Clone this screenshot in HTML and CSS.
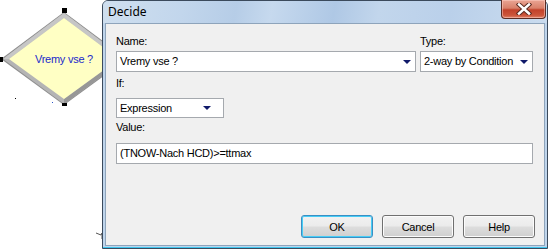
FILE: index.html
```html
<!DOCTYPE html>
<html lang="en">
<head>
    <meta charset="UTF-8">
    <title>Decide</title>
    <link rel="stylesheet" href="styles.css">
</head>
<body>
    <div class="desktop">
        <div class="node">
            <svg class="node-shape" width="130" height="110" viewBox="0 0 130 110">
                <polygon points="64,12 127,59 64,105 1,59" fill="#8e8e8e"/>
                <polygon points="64,13 125,59 64,104 3,59" fill="#b4b4b4"/>
                <polygon points="3,59 64,13 125,59 119,59 64,18 9,59" fill="#c6c6c6"/>
                <polygon points="64,104 125,59 119,59 64,99" fill="#979797"/>
                <polygon points="64,18 119,59 64,99 9,59" fill="#ffffc4"/>
                <rect x="62" y="8" width="5" height="5" fill="#000"/>
                <rect x="0" y="57" width="3" height="5" fill="#000"/>
                <rect x="62" y="103" width="5" height="3" fill="#000"/>
                <rect x="15" y="98" width="1" height="1" fill="#000"/>
                <rect x="52" y="102" width="1" height="1" fill="#2a55c8"/>
            </svg>
            <span class="node-label">Vremy vse ?</span>
        </div>
        <svg class="link-tip" width="8" height="8" viewBox="0 0 8 8">
            <path d="M0 2 L5 4 L6 2 L6 8" fill="none" stroke="#555" stroke-width="1"/>
        </svg>

        <div class="dialog">
            <div class="titlebar">
                <span class="title">Decide</span>
                <button class="close-btn" aria-label="Close">
                    <svg width="16" height="12" viewBox="0 0 16 12">
                        <path d="M3 1.5 L13 10.5 M13 1.5 L3 10.5" stroke="#5a2a20" stroke-width="4.5" stroke-linecap="square"/>
                        <path d="M3 1.5 L13 10.5 M13 1.5 L3 10.5" stroke="#fff" stroke-width="2.5" stroke-linecap="square"/>
                    </svg>
                </button>
            </div>
            <div class="client">
                <div class="row-top">
                    <div class="field name-field">
                        <label class="label">Name:</label>
                        <div class="combo">
                            <span>Vremy vse ?</span>
                            <span class="arrow"></span>
                        </div>
                    </div>
                    <div class="field type-field">
                        <label class="label">Type:</label>
                        <div class="combo">
                            <span>2-way by Condition</span>
                            <span class="arrow"></span>
                        </div>
                    </div>
                </div>
                <label class="label if-label">If:</label>
                <div class="combo expr-combo">
                    <span>Expression</span>
                    <span class="arrow"></span>
                </div>
                <label class="label value-label">Value:</label>
                <div class="textbox">(TNOW-Nach HCD)&gt;=ttmax</div>
                <div class="buttons">
                    <button class="btn btn-default">OK</button>
                    <button class="btn">Cancel</button>
                    <button class="btn">Help</button>
                </div>
            </div>
        </div>
    </div>
</body>
</html>
```

FILE: styles.css
```css
* {
    box-sizing: border-box;
    margin: 0;
    padding: 0;
}

body {
    background: #fff;
    font-family: 'Liberation Sans', Arial, sans-serif;
    font-size: 11px;
    letter-spacing: -0.25px;
    color: #000;
    overflow: hidden;
}

.desktop {
    position: relative;
    width: 549px;
    height: 249px;
    display: flex;
}

/* diagram node behind the dialog */
.node {
    position: absolute;
    left: 0;
    top: 0;
    width: 130px;
    height: 110px;
}

.node-shape {
    display: block;
}

.node-label {
    position: absolute;
    left: 0;
    top: 53px;
    width: 128px;
    text-align: center;
    font-size: 11px;
    line-height: 13px;
    color: #1a2acb;
}

.link-tip {
    position: absolute;
    left: 96px;
    top: 231px;
}

/* dialog window */
.dialog {
    position: relative;
    margin-left: 102px;
    width: 446px;
    height: 249px;
    display: flex;
    flex-direction: column;
    border: 1px solid #3b4a5c;
    border-radius: 6px 6px 0 0;
    padding: 0 2px 2px 2px;
    background: #bfd5ec;
    box-shadow: inset 0 -1px 0 #3fc6ef;
}

.titlebar {
    height: 22px;
    display: flex;
    align-items: flex-start;
    background: linear-gradient(100deg, #cfdfef 0%, #c2d6ec 18%, #b6cde7 30%, #c6d9ee 38%, #afc8e5 52%, #c2d6ec 62%, #bad0ea 78%, #cadcef 100%);
    margin: 0 -2px;
    padding-left: 5px;
    border-radius: 5px 5px 0 0;
}

.title {
    font-family: 'Noto Sans', 'Open Sans', sans-serif;
    font-size: 12px;
    letter-spacing: 0;
    line-height: 22px;
    color: #000;
}

.close-btn {
    margin-left: auto;
    margin-right: 1px;
    margin-top: -1px;
    width: 45px;
    height: 19px;
    border: 1px solid #5a2c24;
    border-top: none;
    border-radius: 0 0 4px 4px;
    background: linear-gradient(#eaa594 0%, #d9806a 45%, #c2412a 55%, #cc553a 85%, #e0836a 100%);
    box-shadow: inset 0 0 0 1px rgba(255, 210, 200, 0.5);
    display: flex;
    align-items: center;
    justify-content: center;
}

.client {
    flex: 1;
    display: flex;
    flex-direction: column;
    align-items: flex-start;
    background: #f0f0f0;
    border: 1px solid #8ea4bb;
    padding: 11px 9px 7px 10px;
}

.label {
    display: block;
    line-height: 13px;
    height: 13px;
}

.row-top {
    display: flex;
    gap: 4px;
}

.field .label {
    margin-bottom: 3px;
}

.name-field {
    width: 300px;
}

.type-field {
    width: 113px;
}

.combo {
    height: 21px;
    display: flex;
    align-items: center;
    justify-content: space-between;
    background: #fff;
    border: 1px solid #a5a9ae;
    padding: 0 4px 0 3px;
    line-height: 13px;
}

.arrow {
    width: 0;
    height: 0;
    border-left: 4px solid transparent;
    border-right: 4px solid transparent;
    border-top: 4px solid #101a6a;
}

.if-label {
    margin-top: 5px;
}

.expr-combo {
    width: 108px;
    height: 20px;
    margin-top: 8px;
    padding-right: 12px;
}

.value-label {
    margin-top: 3px;
}

.textbox {
    margin-top: 9px;
    width: 417px;
    height: 21px;
    background: #fff;
    border: 1px solid #a5a9ae;
    padding: 0 3px;
    line-height: 19px;
}

.buttons {
    margin-top: auto;
    align-self: flex-end;
    display: flex;
    gap: 9px;
}

.btn {
    width: 72px;
    height: 23px;
    font-family: 'Liberation Sans', Arial, sans-serif;
    font-size: 11px;
    letter-spacing: -0.25px;
    color: #000;
    border: 1px solid #707070;
    border-radius: 3px;
    background: linear-gradient(#f2f2f2 0%, #ebebeb 48%, #dddddd 52%, #cfcfcf 100%);
    box-shadow: inset 0 0 0 1px #fcfcfc;
}

.btn-default {
    border-color: #3a8fc4;
    box-shadow: inset 0 0 0 1px #47cdf6;
}
```
